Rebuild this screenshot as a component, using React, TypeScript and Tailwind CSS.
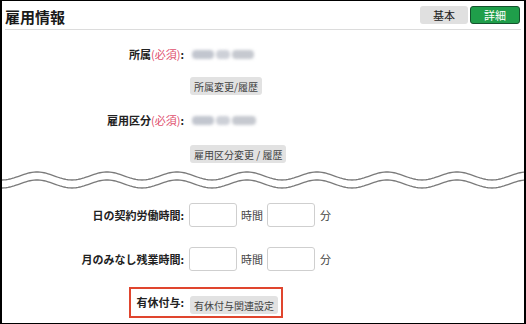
import React from 'react';

const font = { fontFamily: '"Noto Sans CJK JP", "Noto Sans", sans-serif' };

const wave = (c: number) => {
  const pts: string[] = [];
  for (let x = 0; x <= 526; x += 2) {
    pts.push(`${x},${(c + 4 * Math.cos((2 * Math.PI * x) / 70)).toFixed(2)}`);
  }
  return pts.join(' ');
};

const Label: React.FC<{ text: string; required?: boolean }> = ({ text, required }) => (
  <div className="w-[182px] shrink-0 text-right font-bold text-[11px] text-[#222] whitespace-nowrap">
    {text}
    {required && <span className="font-normal text-[#e0506e]">(必須)</span>}
    <span>:</span>
  </div>
);

const GrayBtn: React.FC<{ children: React.ReactNode }> = ({ children }) => (
  <span className="inline-flex items-center h-[18px] px-[4px] rounded-[3px] bg-[#e2e2e2] text-[10px] text-[#444] whitespace-nowrap">
    {children}
  </span>
);

// blurred (masked) value text
const Blur: React.FC<{ w: number }> = ({ w }) => (
  <div className="flex items-center gap-[2px] blur-[1.5px]">
    <div className="h-[9px] w-[22px] rounded-sm bg-[#c2c6cf]" />
    <div className="h-[9px] w-[14px] rounded-sm bg-[#cdd0d7]" />
    <div className="h-[9px] rounded-sm bg-[#c6c9d0]" style={{ width: w - 38 }} />
  </div>
);

const TimeInput = () => (
  <div className="w-[48px] h-[24px] rounded-[3px] border border-[#cfcfcf] bg-white" />
);

const App: React.FC = () => {
  return (
    <div style={font} className="w-[526px] h-[324px] bg-white border-y border-x-2 border-black overflow-hidden flex flex-col">
      <div className="mx-[3px] h-[29px] flex items-center justify-between border-b border-[#dcdcdc] shrink-0">
        <h1 className="text-[15px] font-bold text-[#1a1a1a] leading-none pt-[2px]">雇用情報</h1>
        <div className="flex gap-[2px] mr-[1px]">
          <span className="w-[48px] h-[18px] flex items-center justify-center rounded-[3px] bg-[#e0e0e0] text-[11px] text-[#222]">基本</span>
          <span className="w-[50px] h-[18px] flex items-center justify-center rounded-[3px] bg-[#1f9e4a] border border-[#14532d] text-[11px] text-white">詳細</span>
        </div>
      </div>

      <div className="flex items-center h-[40px] mt-[4px]">
        <Label text="所属" required />
        <div className="ml-[8px]">
          <Blur w={60} />
        </div>
      </div>
      <div className="flex items-center h-[24px] pl-[188px]">
        <GrayBtn>所属変更/履歴</GrayBtn>
      </div>

      <div className="flex items-center h-[44px]">
        <Label text="雇用区分" required />
        <div className="ml-[8px]">
          <Blur w={62} />
        </div>
      </div>
      <div className="flex items-center h-[24px] pl-[188px]">
        <GrayBtn>雇用区分変更 / 履歴</GrayBtn>
      </div>

      <svg width="526" height="22" className="shrink-0 mt-[5px]" viewBox="0 0 526 22">
        <polyline points={wave(5)} fill="none" stroke="#7a7a7a" strokeWidth="1.3" />
        <polyline points={wave(13)} fill="none" stroke="#7a7a7a" strokeWidth="1.3" />
      </svg>

      <div className="flex items-center h-[32px] mt-[6px]">
        <Label text="日の契約労働時間" />
        <div className="ml-[5px] flex items-center text-[11px] text-[#444]">
          <TimeInput />
          <span className="mx-[4px]">時間</span>
          <TimeInput />
          <span className="ml-[5px]">分</span>
        </div>
      </div>

      <div className="flex items-center h-[32px] mt-[12px]">
        <Label text="月のみなし残業時間" />
        <div className="ml-[5px] flex items-center text-[11px] text-[#444]">
          <TimeInput />
          <span className="mx-[4px]">時間</span>
          <TimeInput />
          <span className="ml-[5px]">分</span>
        </div>
      </div>

      <div className="ml-[127px] mt-[12px] w-[154px] h-[31px] border-2 border-[#e0452e] flex items-center shrink-0">
        <div className="w-[53px] text-right font-bold text-[11px] text-[#222] whitespace-nowrap">有休付与:</div>
        <div className="ml-[6px]">
          <GrayBtn>有休付与関連設定</GrayBtn>
        </div>
      </div>
    </div>
  );
};

export default App;
